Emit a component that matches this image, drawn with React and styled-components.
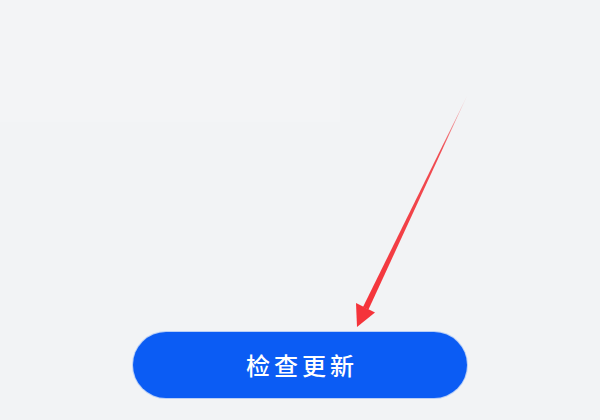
import React from 'react';
import styled, { createGlobalStyle } from 'styled-components';

const GlobalStyle = createGlobalStyle`
  html, body {
    margin: 0;
    padding: 0;
    background: #f2f3f5;
  }
  body {
    font-family: "Noto Sans CJK SC", "Noto Sans", sans-serif;
  }
`;

const Page = styled.div`
  position: relative;
  width: 600px;
  height: 420px;
  overflow: hidden;
  background: #f2f3f5;
  display: flex;
  flex-direction: column;
`;

const FadedCard = styled.div`
  width: 340px;
  height: 122px;
  background: #f3f4f6;
`;

const Footer = styled.div`
  margin-top: 210px;
  display: flex;
  justify-content: center;
`;

const UpdateButton = styled.button`
  width: 334px;
  height: 66px;
  border: none;
  border-radius: 33px;
  background: #0b5cf4;
  box-shadow: 0 0 0 1px rgba(80, 140, 250, 0.35);
  color: #fff;
  font-family: "Noto Sans CJK SC", "Noto Sans", sans-serif;
  font-size: 24px;
  font-weight: 500;
  letter-spacing: 4px;
  padding: 0 0 2px 4px;
  cursor: pointer;
`;

const ArrowLayer = styled.svg`
  position: absolute;
  left: 0;
  top: 0;
  pointer-events: none;
`;

function Arrow() {
  return (
    <ArrowLayer width="600" height="420" viewBox="0 0 600 420">
      <defs>
        <linearGradient id="shaft" x1="467" y1="96" x2="365" y2="308" gradientUnits="userSpaceOnUse">
          <stop offset="0" stopColor="#f03a40" stopOpacity="0.2" />
          <stop offset="0.25" stopColor="#f03a40" stopOpacity="0.9" />
          <stop offset="1" stopColor="#f5333a" />
        </linearGradient>
      </defs>
      <polygon points="467,96 368.5,309.5 363,306.9" fill="url(#shaft)" />
      <polygon points="357,327 356,303 375,312.5" fill="#f5333a" />
    </ArrowLayer>
  );
}

export default function App() {
  return (
    <>
      <GlobalStyle />
      <Page>
        <FadedCard />
        <Footer>
          <UpdateButton>检查更新</UpdateButton>
        </Footer>
        <Arrow />
      </Page>
    </>
  );
}
